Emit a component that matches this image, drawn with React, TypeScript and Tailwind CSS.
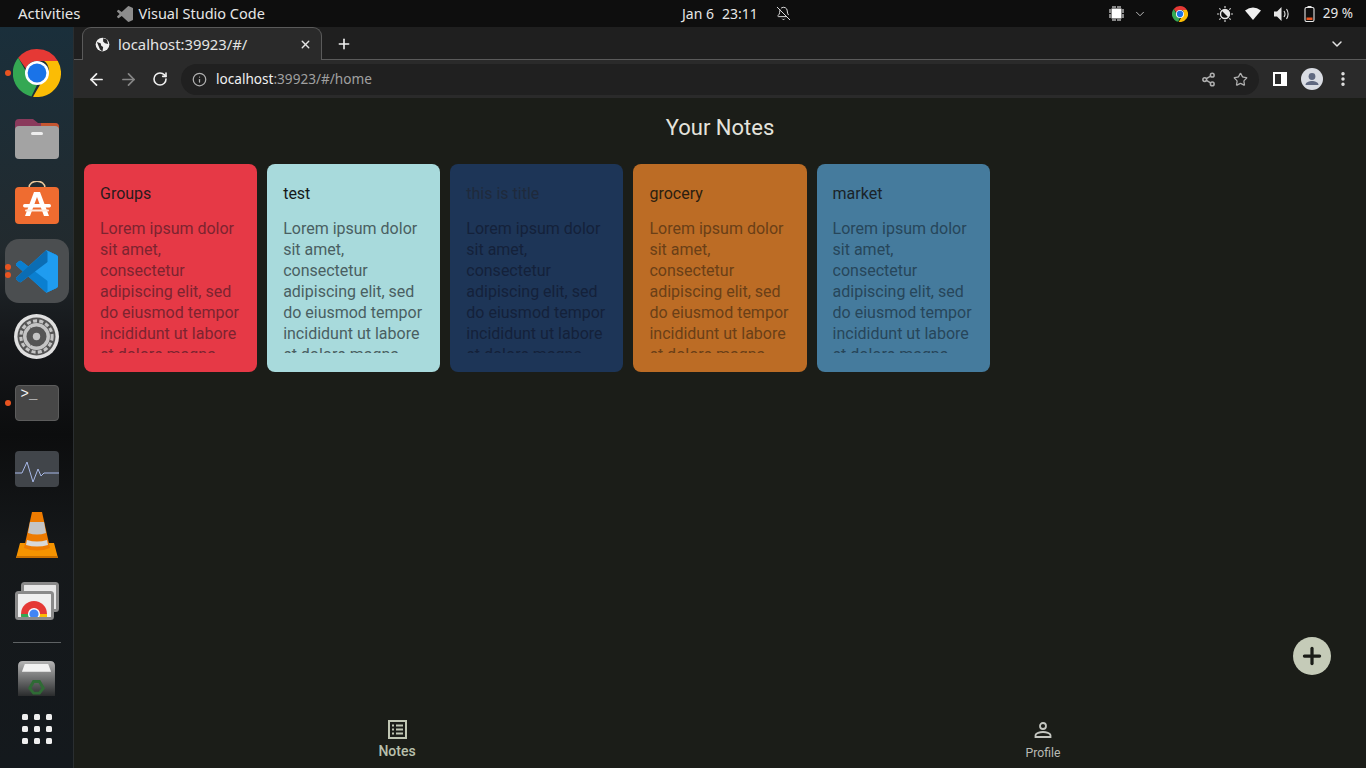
import React from 'react';
import { ArrowLeft, ArrowRight, BellOff, ChevronDown, EllipsisVertical, Info, Plus, RotateCw, Share2, Star, X } from 'lucide-react';

const notes = [
  { title: 'Groups', bg: 'bg-[#e63946]', titleColor: 'text-[#2a1a1c]', bodyColor: 'text-[#7c2430]' },
  { title: 'test', bg: 'bg-[#a8dadc]', titleColor: 'text-[#15191a]', bodyColor: 'text-[#4a5f62]' },
  { title: 'this is title', bg: 'bg-[#1d3557]', titleColor: 'text-[#1f2a3c]', bodyColor: 'text-[#14213a]' },
  { title: 'grocery', bg: 'bg-[#bc6c25]', titleColor: 'text-[#2b1e10]', bodyColor: 'text-[#6a3f17]' },
  { title: 'market', bg: 'bg-[#457b9d]', titleColor: 'text-[#1a2329]', bodyColor: 'text-[#27465a]' },
];

const lorem = 'Lorem ipsum dolor sit amet, consectetur adipiscing elit, sed do eiusmod tempor incididunt ut labore et dolore magna aliqua.';

const vscodeShape = 'M70.9 99.3a6.2 6.2 0 0 0 5-.2l20.6-9.9A6.3 6.3 0 0 0 100 83.6V16.4a6.3 6.3 0 0 0-3.5-5.6L75.9.9a6.2 6.2 0 0 0-7.1 1.2L29.4 38.1 12.2 25.1a4.2 4.2 0 0 0-5.3.2l-5.5 5a4.2 4.2 0 0 0 0 6.2L16.3 50 1.4 63.6a4.2 4.2 0 0 0 0 6.1l5.5 5a4.2 4.2 0 0 0 5.3.2l17.2-13 39.4 35.9a6.2 6.2 0 0 0 2.1 1.4zM75 27.3 45.1 50 75 72.7z';

function ChromeLogo({ size }: { size: number }) {
  return (
    <svg width={size} height={size} viewBox="0 0 48 48">
      <path d="M24 0a24 24 0 0 1 20.8 12H24a12 12 0 0 0-11.2 7.6L5.2 8.8A24 24 0 0 1 24 0z" fill="#e53935" />
      <path d="M5.2 8.8l10 17.4A10 10 0 0 0 24 36l-5.6 11.4A24 24 0 0 1 5.2 8.8z" fill="#34a853" />
      <path d="M44.8 12A24 24 0 0 1 20 47.7L31 29a10 10 0 0 0 0-17z" fill="#fbbc05" />
      <circle cx="24" cy="24" r="12" fill="#fff" />
      <circle cx="24" cy="24" r="9.4" fill="#1a73e8" />
    </svg>
  );
}

function RunDot({ className }: { className: string }) {
  return <span className={`absolute left-[5px] w-[6px] h-[6px] rounded-full bg-[#e95420] ${className}`} />;
}

function Dock() {
  return (
    <aside className="relative w-[74px] shrink-0 flex flex-col items-center border-r border-[#2a2e30] bg-[linear-gradient(180deg,#1a2f3b_0%,#222a2e_30%,#15171a_42%,#0c0d0e_55%,#15181a_70%,#14191d_100%)] pt-[22px]">
      <RunDot className="top-[43px]" />
      <ChromeLogo size={48} />

      <svg className="mt-[22px]" width="44" height="40" viewBox="0 2 44 40">
        <path d="M0 6a4 4 0 0 1 4-4h14l5 4h17a4 4 0 0 1 4 4v14H0z" fill="#8a3a5c" />
        <path d="M26 6h14a4 4 0 0 1 4 4v8H26z" fill="#c4552f" />
        <rect y="9" width="44" height="33" rx="4" fill="#a3a3a3" />
        <rect x="16" y="15" width="12" height="3" rx="1.5" fill="#eeeeee" />
      </svg>

      <svg className="mt-[22px]" width="44" height="43" viewBox="0 0 44 43">
        <path d="M14 7c0-9 16-9 16 0" fill="none" stroke="#eac79a" strokeWidth="1.5" />
        <rect y="6" width="44" height="37" rx="4" fill="#ef6c30" />
        <path d="M19 11h6l9 24h-5l-7-19-7 19h-5z" fill="#fff" />
        <rect x="8" y="23" width="28" height="3.5" rx="1.7" fill="#fff" />
        <rect x="10" y="28.5" width="24" height="2" rx="1" fill="#ffe7d9" />
      </svg>

      <div className="relative mt-[15px] w-[64px] h-[64px] rounded-[14px] bg-[#4b4e50] flex items-center justify-center">
        <svg width="42" height="43" viewBox="0 0 100 100">
          <path d={vscodeShape} fill="#1f9cf0" />
          <path d="M96.5 89.2 75.9 99.1a6.2 6.2 0 0 1-7.1-1.2L1.4 36.4a4.2 4.2 0 0 1 0-6.1l5.5-5a4.2 4.2 0 0 1 5.3-.2l81.2 61.3a4.2 4.2 0 0 0 6.6-3.3v.5a6.3 6.3 0 0 1-3.5 5.6z" fill="#0a7fd0" />
          <path d="M96.5 10.8 75.9.9a6.2 6.2 0 0 0-7.1 1.2L1.4 63.6a4.2 4.2 0 0 0 0 6.1l5.5 5a4.2 4.2 0 0 0 5.3.2L93.4 13.6a4.2 4.2 0 0 1 6.6 3.3v-.5a6.3 6.3 0 0 0-3.5-5.6z" fill="#0b6db4" />
          <path d="M75.9 99.1a6.2 6.2 0 0 1-7.1-1.2c2.3 2.3 6.2.7 6.2-2.6V4.7c0-3.3-3.9-4.9-6.2-2.6a6.2 6.2 0 0 1 7.1-1.2l20.6 9.9a6.3 6.3 0 0 1 3.5 5.6v67.2a6.3 6.3 0 0 1-3.5 5.6z" fill="#1f9cf0" />
        </svg>
      </div>
      <RunDot className="top-[237px]" />
      <RunDot className="top-[245px]" />

      <svg className="mt-[11px]" width="45" height="45" viewBox="0 0 44 44">
        <circle cx="22" cy="22" r="22" fill="#e0e0e0" />
        <circle cx="22" cy="22" r="18.6" fill="#555555" />
        <circle cx="22" cy="22" r="15.3" fill="none" stroke="#c4c4c4" strokeWidth="3" strokeDasharray="4 2.2" />
        <circle cx="22" cy="22" r="11.5" fill="none" stroke="#c4c4c4" strokeWidth="3.4" />
        <path d="M16 13l12 9-12 9z" fill="#555555" />
        <circle cx="22" cy="22" r="3.6" fill="#c4c4c4" />
      </svg>

      <div className="mt-[26px] w-[44px] h-[36px] rounded-[4px] bg-[#474747] border border-[#5c5c5c] pl-[5px]">
        <span className="block text-[#f4f4f4] text-[14px] leading-[17px] font-['Liberation_Mono',monospace]">&gt;_</span>
      </div>
      <RunDot className="top-[373px]" />

      <svg className="mt-[30px]" width="44" height="36" viewBox="0 0 44 36">
        <rect width="44" height="36" rx="4" fill="#41454a" />
        <path d="M0 22h7l5-11 6 20 5-13 3 7 3-3h15" fill="none" stroke="#a8b9e8" strokeWidth="1" />
      </svg>

      <svg className="mt-[25px]" width="42" height="46" viewBox="0 0 42 46">
        <path d="M4 31h34l4 15H0z" fill="#f59300" />
        <path d="M16 0h10l8 36q-13 5-26 0z" fill="#ee7b00" />
        <path d="M14 10h14l2 11q-9 3-18 0z" fill="#c4c4c4" />
        <path d="M11 28q10 3 20 0l1 5q-11 3-22 0z" fill="#d8d8d8" />
        <path d="M1 44h40l1 2H0z" fill="#c96f00" />
      </svg>

      <svg className="mt-[24px]" width="44" height="38" viewBox="0 0 44 38">
        <rect x="7.5" y="1.5" width="35" height="27" rx="2" fill="#e8e8e8" stroke="#8a8a8a" strokeWidth="3" />
        <rect x="1.5" y="10.5" width="36" height="26" rx="2" fill="#efefef" stroke="#8a8a8a" strokeWidth="3" />
        <clipPath id="shot"><rect x="3" y="12" width="33" height="23" /></clipPath>
        <g clipPath="url(#shot)">
          <circle cx="19" cy="32" r="13" fill="#e53935" />
          <path d="M19 32L6 32a13 13 0 0 0 5 10z" fill="#34a853" />
          <path d="M19 32h13v10H19z" fill="#fbbc05" />
          <circle cx="19" cy="32" r="6" fill="#fff" />
          <circle cx="19" cy="32" r="4.6" fill="#4285f4" />
        </g>
      </svg>

      <div className="mt-[22px] w-[48px] h-px bg-[#5e6264]" />

      <svg className="mt-[18px]" width="37" height="35" viewBox="0 0 38 36">
        <defs>
          <linearGradient id="bin" x1="0" x2="0" y1="0" y2="1">
            <stop offset="0" stopColor="#b5b5b5" />
            <stop offset="1" stopColor="#2a2c2d" />
          </linearGradient>
        </defs>
        <path d="M5 0h28q5 0 5 5v31H0V5q0-5 5-5z" fill="url(#bin)" />
        <path d="M7 3h24l3 8H4z" fill="#f2f2f2" />
        <path d="M12 28l4-7h6l4 7-4 5h-6z" fill="none" stroke="#2f6b35" strokeWidth="3" />
      </svg>

      <div className="mt-[18px] grid grid-cols-3 gap-x-[6px] gap-y-[6px]">
        {Array.from({ length: 9 }).map((_, i) => (
          <span key={i} className="w-[6px] h-[6px] rounded-[1.5px] bg-[#efefef]" />
        ))}
      </div>
    </aside>
  );
}

function TopBar() {
  return (
    <header className="relative h-[27px] shrink-0 bg-[#0e0e0e] flex items-center text-[14.5px] text-[#e6e6e6] font-['Noto_Sans',sans-serif]">
      <span className="ml-[18px] text-[15px]">Activities</span>
      <svg className="ml-[36px]" width="16" height="16" viewBox="0 0 100 100">
        <path d={vscodeShape} fill="#8c8c8c" />
      </svg>
      <span className="ml-[6px]">Visual Studio Code</span>

      <div className="absolute left-[682px] top-0 h-full flex items-center text-[14px]">
        <span>Jan 6</span>
        <span className="ml-[8px]">23:11</span>
        <BellOff className="ml-[18px]" size={15} strokeWidth={1.5} />
      </div>

      <div className="ml-auto flex items-center h-full">
        <svg width="15" height="15" viewBox="0 0 15 15">
          <rect x="2.5" y="2.5" width="10" height="10" fill="#fff" />
          <path d="M4 0v2M6 0v2M9 0v2M11 0v2M4 13v2M6 13v2M9 13v2M11 13v2M0 4h2M0 6h2M0 9h2M0 11h2M13 4h2M13 6h2M13 9h2M13 11h2" stroke="#fff" strokeWidth="1" />
        </svg>
        <ChevronDown className="ml-[9px] text-[#d0d0d0]" size={14} strokeWidth={1.5} />
        <span className="ml-[25px] flex"><ChromeLogo size={16} /></span>
        <svg className="ml-[29px]" width="16" height="16" viewBox="0 0 16 16">
          <circle cx="8" cy="8" r="4.5" fill="none" stroke="#e6e6e6" strokeWidth="1.4" />
          <path d="M8 3.5a4.5 4.5 0 0 1 0 9z" fill="#e6e6e6" transform="rotate(-45 8 8)" />
          <path d="M8 0v2M8 14v2M0 8h2M14 8h2M2.3 2.3l1.4 1.4M12.3 12.3l1.4 1.4M2.3 13.7l1.4-1.4M12.3 3.7l1.4-1.4" stroke="#d0d0d0" strokeWidth="1.2" />
        </svg>
        <svg className="ml-[12px]" width="16" height="13" viewBox="0 0 16 13">
          <path d="M0 3.5Q8-2.5 16 3.5L8 13z" fill="#f0f0f0" />
        </svg>
        <svg className="ml-[13px]" width="15" height="14" viewBox="0 0 15 14">
          <path d="M0 4.5h3L7.5 0v14L3 9.5H0z" fill="#e6e6e6" />
          <path d="M10 4q2 3 0 6M12.5 2q3.2 5 0 10" fill="none" stroke="#e6e6e6" strokeWidth="1.1" />
        </svg>
        <svg className="ml-[15px]" width="11" height="16" viewBox="0 0 11 16">
          <rect x="3.5" y="0" width="4" height="2" fill="#e6e6e6" />
          <rect x="1" y="1.5" width="9" height="14" rx="1.5" fill="none" stroke="#e6e6e6" strokeWidth="1.1" />
          <rect x="2.5" y="11.5" width="6" height="2.5" fill="#e95420" />
        </svg>
        <span className="ml-[8px] mr-[13px] text-[13.5px]">29 %</span>
      </div>
    </header>
  );
}

function Browser() {
  return (
    <>
      <div className="relative h-[33px] shrink-0 bg-[#1f1f1f] flex items-end pl-[8px] font-['Noto_Sans',sans-serif]">
        <div className="absolute left-0 right-0 bottom-0 h-px bg-[#5a5a5a]" />
        <div className="relative w-[240px] h-[33px] bg-[#2a2a2a] rounded-t-[9px] border-t border-x border-[#5a5a5a] flex items-center pl-[12px] pr-[9px] text-[14.8px] text-[#e4e4e4]">
          <svg width="15" height="15" viewBox="0 0 24 24">
            <circle cx="12" cy="12" r="11" fill="#f0f0f0" />
            <path d="M3 8l6 2 1 4 3 2-1 7-4-3-2-5zM13 2l6 2 2 7-5-1-3-3z" fill="#2a2a2a" />
          </svg>
          <span className="ml-[8px]">localhost:39923/#/</span>
          <X className="ml-auto text-[#e4e4e4]" size={13} strokeWidth={2.5} />
        </div>
        <Plus className="ml-[14px] mb-[8px] text-[#f2f2f2]" size={16} strokeWidth={2.4} />
        <ChevronDown className="ml-auto mr-[21px] mb-[8px] text-[#e4e4e4]" size={16} strokeWidth={2.2} />
      </div>
      <div className="h-[38px] shrink-0 bg-[#2a2a2a] flex items-center pl-[13px] pr-[14px] font-['Noto_Sans',sans-serif]">
        <ArrowLeft className="text-[#f0f0f0]" size={19} strokeWidth={2.2} />
        <ArrowRight className="ml-[13px] text-[#868686]" size={19} strokeWidth={2.2} />
        <RotateCw className="ml-[14px] text-[#f0f0f0]" size={16} strokeWidth={2.4} />
        <div className="ml-[13px] flex-1 h-[31px] rounded-full bg-[#202020] flex items-center pl-[11px] pr-[11px] text-[13.6px]">
          <Info className="text-[#b0b0b0]" size={15} />
          <span className="ml-[9px] text-[#f0f0f0]">localhost</span>
          <span className="text-[#a0a0a0]">:39923/#/home</span>
          <Share2 className="ml-auto text-[#b0b0b0]" size={15} strokeWidth={2.4} />
          <Star className="ml-[17px] text-[#b0b0b0]" size={15} strokeWidth={2} />
        </div>
        <svg className="ml-[14px]" width="14" height="14" viewBox="0 0 14 14">
          <rect width="14" height="14" fill="#fff" />
          <rect x="2" y="2" width="6" height="10" fill="#2a2a2a" />
        </svg>
        <span className="ml-[14px] w-[22px] h-[22px] rounded-full bg-[#d9dce3] flex items-center justify-center overflow-hidden">
          <svg width="22" height="22" viewBox="0 0 22 22">
            <circle cx="11" cy="8.5" r="3.4" fill="#5f6880" />
            <path d="M4.5 17c0-3 4-4 6.5-4s6.5 1 6.5 4z" fill="#5f6880" />
          </svg>
        </span>
        <EllipsisVertical className="ml-[11px] text-[#e6e6e6]" size={18} strokeWidth={2.6} />
      </div>
    </>
  );
}

function NoteCard({ note }: { note: (typeof notes)[number] }) {
  return (
    <div className={`w-[173.15px] h-[208px] rounded-[8px] ${note.bg} pt-[19px] px-[16px]`}>
      <h2 className={`text-[16px] leading-[21px] ${note.titleColor}`}>{note.title}</h2>
      <p className={`mt-[14px] h-[135px] overflow-hidden text-[16px] leading-[21px] ${note.bodyColor}`}>{lorem}</p>
    </div>
  );
}

export default function App() {
  return (
    <div className="w-[1366px] h-[768px] overflow-hidden flex flex-col bg-[#1b1d18]">
      <TopBar />
      <div className="flex-1 flex min-h-0">
        <Dock />
        <div className="relative flex-1 flex flex-col min-w-0 font-['Roboto',sans-serif]">
          <Browser />
          <main className="flex-1 flex flex-col min-h-0 bg-[#1b1d18]">
            <h1 className="mt-[16px] text-center text-[22px] leading-[28px] text-[#e4e3dc]">Your Notes</h1>
            <div className="mt-[22px] flex gap-[10px] pl-[10px]">
              {notes.map((note) => (
                <NoteCard key={note.title} note={note} />
              ))}
            </div>
            <nav className="mt-auto h-[52px] grid grid-cols-2">
              <div className="flex flex-col items-center">
                <svg className="mt-[4px]" width="19" height="19" viewBox="0 0 19 19">
                  <rect x="1" y="1" width="17" height="17" fill="none" stroke="#c0c6b3" strokeWidth="2" />
                  <path d="M4 5.5h2M8 5.5h7M4 9.5h2M8 9.5h7M4 13.5h2M8 13.5h7" stroke="#c0c6b3" strokeWidth="1.8" />
                </svg>
                <span className="mt-[3px] text-[14px] font-medium leading-[18px] text-[#b9c0ac]">Notes</span>
              </div>
              <div className="flex flex-col items-center">
                <svg className="mt-[5px]" width="18" height="18" viewBox="0 0 18 18">
                  <circle cx="9" cy="5" r="3" fill="none" stroke="#c4c6c0" strokeWidth="1.8" />
                  <path d="M1.5 16v-1.5C1.5 12 6 11 9 11s7.5 1 7.5 3.5V16z" fill="none" stroke="#c4c6c0" strokeWidth="1.8" />
                </svg>
                <span className="mt-[6px] text-[12.2px] leading-[16px] text-[#b8bab4]">Profile</span>
              </div>
            </nav>
          </main>
          <button className="absolute left-[1219px] top-[610px] w-[38px] h-[38px] rounded-full bg-[#c5cbb8] flex items-center justify-center text-[#1b1d18]">
            <Plus size={26} strokeWidth={3} />
          </button>
        </div>
      </div>
    </div>
  );
}
